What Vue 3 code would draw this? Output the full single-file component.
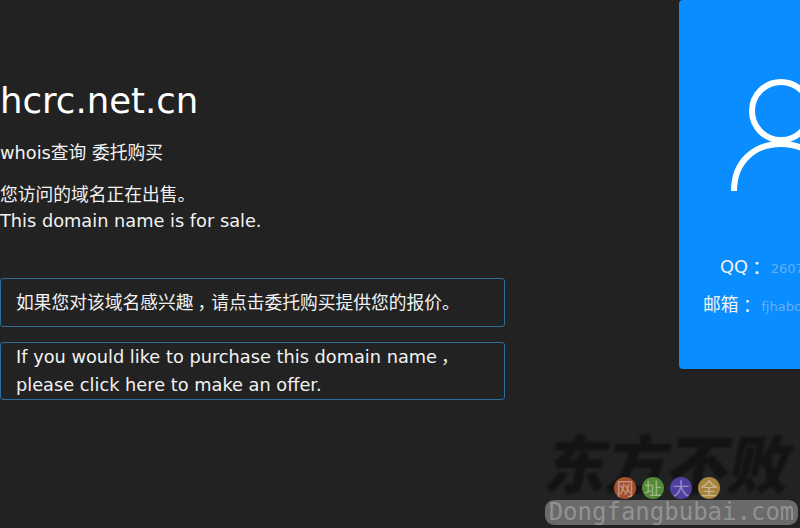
<template>
  <div class="page">
    <main class="left">
      <h1 class="domain">hcrc.net.cn</h1>
      <p class="links"><a>whois查询</a> <a>委托购买</a></p>
      <p class="intro">您访问的域名正在出售。<br />This domain name is for sale.</p>
      <a class="box first">如果您对该域名感兴趣<span class="comma">，</span>请点击委托购买提供您的报价。</a>
      <a class="box second">If you would like to purchase this domain name<span class="comma">，</span><br />please click here to make an offer.</a>
    </main>
    <aside class="card">
      <svg class="avatar" width="120" height="120" viewBox="0 0 120 120" fill="none" stroke="#fff" stroke-width="6">
        <circle cx="60" cy="35" r="29" />
        <path d="M13 115 C13 85 34 68 60 68 C86 68 107 85 107 115" />
      </svg>
      <div class="row qq"><span class="label">QQ<span class="colon">：</span></span><span class="value">2607882199</span></div>
      <div class="row mail"><span class="label">邮箱<span class="colon">：</span></span><span class="value">fjhabc@163.com</span></div>
    </aside>
    <div class="mark">
      <div class="brush">东方不败</div>
      <div class="seals">
        <span class="s1">网</span><span class="s2">址</span><span class="s3">大</span><span class="s4">全</span>
      </div>
      <div class="url">Dongfangbubai.com</div>
    </div>
  </div>
</template>

<script setup>
</script>

<style>
html, body { margin: 0; background: #222; overflow: hidden; }
</style>

<style scoped>
.page {
  position: relative;
  width: 800px;
  height: 528px;
  overflow: hidden;
  display: flex;
  background: #222;
  color: #f2f2f2;
  font-family: "DejaVu Sans", "Noto Sans CJK SC", sans-serif;
  font-size: 17.76px;
}
.left { width: 505px; flex: none; padding-top: 78px; }
.domain { margin: 0; font-size: 35.52px; font-weight: 400; line-height: 46px; color: #fff; }
.links { margin: 17px 0 0; line-height: 24px; }
.intro { margin: 17px 0 0; line-height: 26px; }
.comma { display: inline-block; transform: translateX(4px); }
.box {
  display: block;
  box-sizing: border-box;
  width: 505px;
  padding: 10px 15px;
  border: 1px solid #2a6f9f;
  border-radius: 3px;
  line-height: 28px;
}
.first { margin-top: 44px; height: 49px; }
.second { margin-top: 15px; height: 58px; padding-top: 0; }
.card {
  margin-left: 174px;
  flex: none;
  width: 242px;
  height: 369px;
  box-sizing: border-box;
  background: #0a8dff;
  border-radius: 4px;
  padding-top: 76px;
  display: flex;
  flex-direction: column;
}
.avatar { flex: none; margin-left: 42px; }
.row { white-space: nowrap; line-height: 24px; }
.colon { display: inline-block; transform: translateY(2px); font-family: "Noto Sans CJK TC", sans-serif; }
.qq { margin-top: 57px; padding-left: 41px; }
.mail { margin-top: 10px; padding-left: 24px; }
.value { font-size: 13px; color: #66b0f2; margin-left: 5px; }
.mark {
  position: absolute;
  left: 544px;
  top: 425px;
  width: 256px;
  height: 103px;
}
.brush {
  position: absolute;
  left: 4px;
  top: 0;
  font-size: 62px;
  line-height: 72px;
  font-weight: 900;
  color: #131313;
  white-space: nowrap;
  letter-spacing: -1px;
  filter: blur(0.8px);
  transform: skewX(-12deg);
  font-family: "Noto Sans CJK SC", sans-serif;
}
.seals {
  position: absolute;
  left: 70px;
  top: 52px;
  display: flex;
  gap: 6px;
}
.seals span {
  width: 22px;
  height: 22px;
  border-radius: 50%;
  font: 17px/22px "Noto Sans CJK SC", sans-serif;
  text-align: center;
  color: rgba(255, 255, 255, 0.42);
}
.s1 { background: #a34f2d; }
.s2 { background: #55893a; }
.s3 { background: #4f3f9e; }
.s4 { background: #a8853f; }
.url {
  position: absolute;
  left: 1px;
  top: 75px;
  width: 253px;
  height: 25px;
  border-radius: 9px;
  background: #6a6a6a;
  color: #929292;
  font: 24px/25px "DejaVu Sans Mono", monospace;
  text-align: center;
  white-space: nowrap;
}
</style>
